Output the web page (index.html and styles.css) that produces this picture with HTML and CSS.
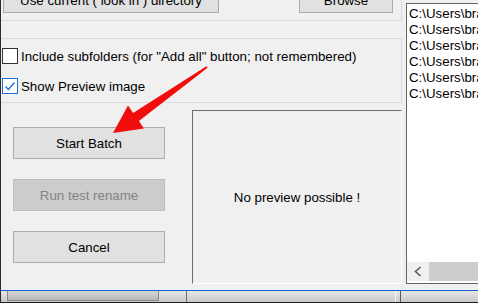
FILE: index.html
```html
<!DOCTYPE html>
<html lang="en">
<head>
    <meta charset="UTF-8">
    <meta name="viewport" content="width=device-width, initial-scale=1.0">
    <title>Batch rename</title>
    <link rel="stylesheet" href="styles.css">
</head>
<body>
    <div class="ventana">
        <div class="principal">
            <div class="columna">
                <!-- Grupo de directorio (cortado arriba) -->
                <div class="grupo-arriba">
                    <button class="boton boton-dir">Use current ( look in ) directory</button>
                    <button class="boton boton-browse">Browse</button>
                </div>

                <!-- Opciones -->
                <div class="grupo-opciones">
                    <label class="opcion"><span class="casilla"></span>Include subfolders (for "Add all" button; not remembered)</label>
                    <label class="opcion"><span class="casilla marcada">
                        <svg width="14" height="14" viewBox="0 0 14 14"><polyline points="2.5,7.5 5.5,10.5 11.5,3.5" fill="none" stroke="#1f6fd6" stroke-width="1.3"/></svg>
                    </span>Show Preview image</label>
                </div>

                <!-- Botones y vista previa -->
                <div class="zona-baja">
                    <div class="botones">
                        <button class="boton accion">Start Batch</button>
                        <button class="boton accion" disabled>Run test rename</button>
                        <button class="boton accion">Cancel</button>
                    </div>
                    <div class="preview">No preview possible !</div>
                </div>
            </div>

            <!-- Lista de archivos -->
            <div class="lista">
                <ul class="items">
                    <li>C:\Users\brady\Pictures\img_001.jpg</li>
                    <li>C:\Users\brady\Pictures\img_002.jpg</li>
                    <li>C:\Users\brady\Pictures\img_003.jpg</li>
                    <li>C:\Users\brady\Pictures\img_004.jpg</li>
                    <li>C:\Users\brady\Pictures\img_005.jpg</li>
                    <li>C:\Users\brady\Pictures\img_006.jpg</li>
                </ul>
                <div class="scroll-h">
                    <span class="flecha">
                        <svg width="10" height="11" viewBox="0 0 10 11"><polyline points="7.5,1 2.5,5.5 7.5,10" fill="none" stroke="#5a5a5a" stroke-width="1.6"/></svg>
                    </span>
                    <span class="pulgar"></span>
                </div>
            </div>
        </div>

        <!-- Barra de estado -->
        <div class="barra-estado">
            <span class="panel"></span>
            <span class="sep sep-1"></span>
            <span class="sep sep-2"></span>
            <span class="sep sep-3"></span>
        </div>
    </div>

    <!-- Flecha roja encima -->
    <svg class="flecha-roja" width="478" height="303" viewBox="0 0 478 303">
        <polygon points="206.4,66.2 133.1,112.9 128,105.5 113,133 144,128.5 138.9,121.1 207.6,67.8" fill="#f20d0d"/>
    </svg>
</body>
</html>
```

FILE: styles.css
```css
* {
    margin: 0;
    padding: 0;
    box-sizing: border-box;
}

body {
    position: relative;
    width: 478px;
    height: 303px;
    overflow: hidden;
    background: #f0f0f0;
    font-family: "Liberation Sans", Arial, sans-serif;
    font-size: 13.3px;
    color: #000;
}

.ventana {
    height: 303px;
    border-left: 1px solid #2b2b2b;
    display: flex;
    flex-direction: column;
}

.principal {
    display: flex;
    height: 290px;
}

.columna {
    width: 405px;
    flex-shrink: 0;
}

/* Grupo de arriba */
.grupo-arriba {
    display: flex;
    align-items: flex-start;
    width: 401px;
    height: 21px;
    border-right: 1px solid #dcdcdc;
    border-bottom: 1px solid #dcdcdc;
}

.boton {
    font: inherit;
    color: #000;
    background: #e1e1e1;
    border: 1px solid #adadad;
}

.boton-dir {
    margin-top: -12px;
    margin-left: 2px;
    width: 216px;
    height: 25px;
}

.boton-browse {
    margin-top: -12px;
    margin-left: 80px;
    width: 94px;
    height: 25px;
}

/* Opciones */
.grupo-opciones {
    margin-top: 17px;
    width: 401px;
    height: 65px;
    border: 1px solid #dcdcdc;
    border-left: none;
    padding: 9px 0 0 1px;
    display: flex;
    flex-direction: column;
    gap: 14px;
}

.opcion {
    display: flex;
    align-items: center;
    height: 16px;
    gap: 3px;
    white-space: nowrap;
}

.casilla {
    width: 16px;
    height: 16px;
    border: 1px solid #333;
    background: #fff;
    display: flex;
    align-items: center;
    justify-content: center;
    flex-shrink: 0;
}

.casilla.marcada {
    border-color: #1f6fd6;
}

/* Zona baja */
.zona-baja {
    display: flex;
    margin-top: 7px;
    height: 174px;
}

.botones {
    margin-left: 12px;
    padding-top: 17px;
    width: 152px;
    display: flex;
    flex-direction: column;
    gap: 20px;
}

.accion {
    width: 152px;
    height: 32px;
}

.accion:disabled {
    background: #cccccc;
    border-color: #bfbfbf;
    color: #838383;
}

.preview {
    margin-left: 27px;
    width: 210px;
    border: 1px solid;
    border-color: #6d6d6d #fff #fff #6d6d6d;
    display: flex;
    align-items: center;
    justify-content: center;
}

/* Lista */
.lista {
    margin-top: 3px;
    width: 120px;
    height: 281px;
    flex-shrink: 0;
    border: 1px solid #646464;
    background: #fff;
    display: flex;
    flex-direction: column;
}

.items {
    list-style: none;
    flex: 1;
    padding: 2px 0 0 2px;
    line-height: 16px;
    white-space: nowrap;
    overflow: hidden;
}

.scroll-h {
    height: 19px;
    margin-bottom: 2px;
    display: flex;
}

.flecha {
    width: 22px;
    background: #f0f0f0;
    display: flex;
    align-items: center;
    justify-content: center;
}

.pulgar {
    flex: 1;
    background: #cdcdcd;
}

/* Barra de estado */
.barra-estado {
    height: 13px;
    border-top: 1px solid #1a62d2;
    border-bottom: 1px solid #1e1e1e;
    background: linear-gradient(#e6e6e6, #c8c8c8);
    display: flex;
}

.panel {
    margin-left: 6px;
    width: 152px;
    height: 10px;
    border: 1px solid #8a8a8a;
    border-top: none;
    background: linear-gradient(#d6d6d6, #b8b8b8);
}

.sep {
    width: 1px;
}

.sep-1 {
    margin-left: 27px;
    background: #6a6a6a;
}

.sep-2 {
    margin-left: 208px;
    background: #f6f6f6;
}

.sep-3 {
    margin-left: 4px;
    background: #5a5a5a;
}

.flecha-roja {
    position: absolute;
    top: 0;
    left: 0;
    pointer-events: none;
}
```
